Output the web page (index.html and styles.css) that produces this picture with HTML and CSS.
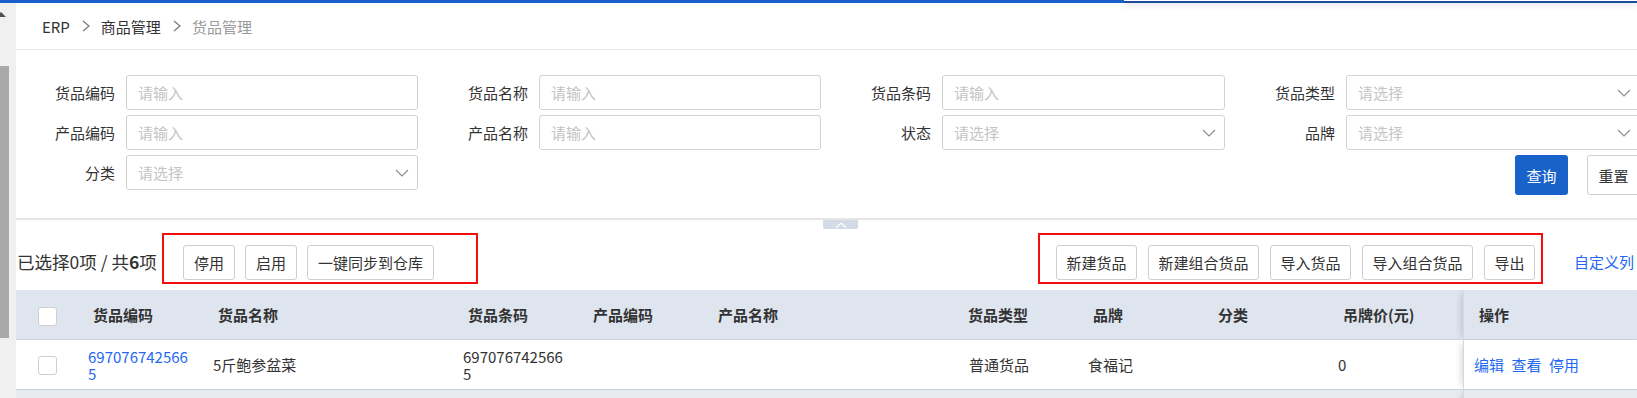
FILE: index.html
```html
<!DOCTYPE html>
<html lang="zh-CN">
<head>
<meta charset="utf-8">
<title>货品管理</title>
<link rel="stylesheet" href="styles.css">
</head>
<body>
<div class="topbar"><div class="topbar-main"></div><div class="topbar-panel"></div></div>
<div class="app">
  <aside class="strip"><span class="strip-arrow"></span><span class="strip-thumb"></span></aside>
  <main class="main">
    <nav class="crumbs">
      <span class="crumb">ERP</span>
      <svg class="crumb-sep" width="8" height="12" viewBox="0 0 8 12"><polyline points="1,1 7,6 1,11" /></svg>
      <span class="crumb">商品管理</span>
      <svg class="crumb-sep" width="8" height="12" viewBox="0 0 8 12"><polyline points="1,1 7,6 1,11" /></svg>
      <span class="crumb crumb-current">货品管理</span>
    </nav>

    <form class="filter">
      <div class="field"><span class="field-label">货品编码</span><input class="control" placeholder="请输入"></div>
      <div class="field"><span class="field-label">货品名称</span><input class="control" placeholder="请输入"></div>
      <div class="field"><span class="field-label">货品条码</span><input class="control" placeholder="请输入"></div>
      <div class="field"><span class="field-label">货品类型</span><div class="control select"><span>请选择</span><svg class="chev" width="14" height="8" viewBox="0 0 14 8"><polyline points="1,1 7,7 13,1" /></svg></div></div>

      <div class="field"><span class="field-label">产品编码</span><input class="control" placeholder="请输入"></div>
      <div class="field"><span class="field-label">产品名称</span><input class="control" placeholder="请输入"></div>
      <div class="field"><span class="field-label">状态</span><div class="control select"><span>请选择</span><svg class="chev" width="14" height="8" viewBox="0 0 14 8"><polyline points="1,1 7,7 13,1" /></svg></div></div>
      <div class="field"><span class="field-label">品牌</span><div class="control select"><span>请选择</span><svg class="chev" width="14" height="8" viewBox="0 0 14 8"><polyline points="1,1 7,7 13,1" /></svg></div></div>

      <div class="field"><span class="field-label">分类</span><div class="control select"><span>请选择</span><svg class="chev" width="14" height="8" viewBox="0 0 14 8"><polyline points="1,1 7,7 13,1" /></svg></div></div>
      <div class="filter-buttons">
        <button type="button" class="btn-query">查询</button>
        <button type="button" class="btn-reset">重置</button>
      </div>
    </form>

    <div class="divider"><span class="collapse"><svg width="12" height="6" viewBox="0 0 12 6"><polyline points="1,5.5 6,1 11,5.5" /></svg></span></div>

    <div class="actions">
      <div class="count">已选择0项 / 共<b>6</b>项</div>
      <div class="mark mark-left">
        <button type="button" class="btn">停用</button>
        <button type="button" class="btn">启用</button>
        <button type="button" class="btn">一键同步到仓库</button>
      </div>
      <div class="mark mark-right">
        <button type="button" class="btn">新建货品</button>
        <button type="button" class="btn">新建组合货品</button>
        <button type="button" class="btn">导入货品</button>
        <button type="button" class="btn">导入组合货品</button>
        <button type="button" class="btn">导出</button>
      </div>
      <a class="custom-cols">自定义列</a>
    </div>

    <table class="grid">
      <colgroup>
        <col class="c-check"><col class="c-s"><col class="c-l"><col class="c-s"><col class="c-s"><col class="c-l"><col class="c-s"><col class="c-s"><col class="c-s"><col class="c-price"><col>
      </colgroup>
      <thead>
        <tr>
          <th class="cell-check"><span class="checkbox"></span></th>
          <th>货品编码</th>
          <th>货品名称</th>
          <th>货品条码</th>
          <th>产品编码</th>
          <th>产品名称</th>
          <th>货品类型</th>
          <th>品牌</th>
          <th>分类</th>
          <th>吊牌价(元)</th>
          <th class="fixed">操作</th>
        </tr>
      </thead>
      <tbody>
        <tr>
          <td class="cell-check"><span class="checkbox"></span></td>
          <td><a class="link">6970767425665</a></td>
          <td>5斤鲍参盆菜</td>
          <td>6970767425665</td>
          <td></td>
          <td></td>
          <td class="cell-type">普通货品</td>
          <td>食福记</td>
          <td></td>
          <td>0</td>
          <td class="fixed"><a class="link op">编辑</a><a class="link op">查看</a><a class="link op">停用</a></td>
        </tr>
        <tr class="stripe">
          <td class="cell-check"><span class="checkbox"></span></td>
          <td></td><td></td><td></td><td></td><td></td><td></td><td></td><td></td><td></td>
          <td class="fixed"></td>
        </tr>
      </tbody>
    </table>
  </main>
</div>
</body>
</html>
```

FILE: styles.css
```css
html, body {
  margin: 0;
  overflow: hidden;
}

body {
  width: 1637px;
  height: 398px;
  font-family: "Noto Sans CJK SC", "Noto Sans", sans-serif;
  font-size: 15px;
  color: #333;
  background: #fff;
}

/* top bar */
.topbar {
  display: flex;
  height: 3px;
  position: relative;
  z-index: 2;
}
.topbar-main {
  width: 1124px;
  background: #1b5fcb;
}
.topbar-panel {
  flex: 1;
  box-sizing: border-box;
  border-top: 1.5px solid #fff;
  background: #1a4d9e;
  box-shadow: 0 2px 6px rgba(0, 0, 0, 0.16);
}

.app {
  display: flex;
}

/* left scrollbar strip */
.strip {
  flex: 0 0 16px;
  width: 16px;
  height: 395px;
  background: #f0f0f0;
  display: flex;
  flex-direction: column;
  overflow: hidden;
}
.strip-arrow {
  width: 0;
  height: 0;
  border-left: 5px solid transparent;
  border-right: 5px solid transparent;
  border-bottom: 5px solid #505050;
  margin: 9px 0 0 -4px;
}
.strip-thumb {
  width: 9px;
  height: 272px;
  margin-top: 49px;
  background: #a8a8a8;
}

.main {
  flex: 0 0 1625px;
  width: 1625px;
}

/* breadcrumb */
.crumbs {
  height: 46px;
  border-bottom: 1px solid #ebebeb;
  display: flex;
  align-items: center;
  padding-left: 26px;
}
.crumb {
  color: #333;
}
.crumb-current {
  color: #9a9a9a;
}
.crumb-sep {
  margin: 0 11px 0 12px;
}
.crumb-sep polyline {
  fill: none;
  stroke: #777;
  stroke-width: 1.2;
}

/* filter form */
.filter {
  display: grid;
  grid-template-columns: 402px 392px 393px 404px;
  column-gap: 11px;
  row-gap: 5px;
  padding: 25px 0 23px;
  margin: 0;
}
.field {
  display: flex;
  align-items: center;
  height: 35px;
}
.field-label {
  flex: 0 0 110px;
  width: 110px;
  box-sizing: border-box;
  padding-right: 11px;
  text-align: right;
  color: #333;
}
.control {
  flex: 1;
  min-width: 0;
  height: 35px;
  box-sizing: border-box;
  border: 1px solid #d2d2d2;
  border-radius: 3px;
  padding: 0 11px;
  background: #fff;
  font: inherit;
  color: #333;
  outline: none;
}
.control::placeholder {
  color: #c4c4c4;
}
.select {
  display: flex;
  align-items: center;
  justify-content: space-between;
  color: #c4c4c4;
  padding-right: 8px;
}
.chev polyline {
  fill: none;
  stroke: #8a8a8a;
  stroke-width: 1.1;
}
.filter-buttons {
  grid-column: 4;
  display: flex;
  justify-content: flex-end;
  gap: 19px;
}
.btn-query,
.btn-reset {
  width: 53px;
  height: 40px;
  border-radius: 3px;
  font: inherit;
  padding: 0;
}
.btn-query {
  background: #1862c9;
  border: none;
  color: #fff;
}
.btn-reset {
  background: #fff;
  border: 1px solid #cfcfcf;
  color: #333;
}

/* divider with collapse tab */
.divider {
  height: 2px;
  background: #e6e6e6;
  position: relative;
}
.collapse {
  position: absolute;
  left: 807px;
  top: 2px;
  width: 35px;
  height: 9px;
  background: #d3dce6;
  border-radius: 0 0 2px 2px;
  display: flex;
  align-items: center;
  justify-content: center;
}
.collapse polyline {
  fill: none;
  stroke: #fff;
  stroke-width: 1.3;
}

/* action bar */
.actions {
  display: flex;
  align-items: flex-end;
  padding: 13px 0 6px;
}
.count {
  flex: 0 0 145px;
  padding-left: 1px;
  font-size: 17.5px;
  line-height: 24px;
  margin-bottom: 10px;
  white-space: nowrap;
}
.count b {
  font-weight: 700;
}
.mark {
  display: flex;
  border: 2px solid #f40d0d;
}
.mark-left {
  gap: 10px;
  padding: 10px 42px 2px 19px;
}
.mark-left .btn {
  padding: 0 10px;
}
.mark-right {
  gap: 11px;
  padding: 10px 6px 2px 16px;
  margin-left: auto;
}
.btn {
  height: 35px;
  padding: 0 9.5px;
  border: 1px solid #cfcfcf;
  border-radius: 3px;
  background: #fff;
  font: inherit;
  color: #333;
  white-space: nowrap;
}
.custom-cols {
  margin: 0 7px 10px 31px;
  line-height: 24px;
  color: #2468f2;
  white-space: nowrap;
}

/* table */
.grid {
  width: 1625px;
  table-layout: fixed;
  border-collapse: separate;
  border-spacing: 0;
}
.c-check { width: 62px; }
.c-s { width: 125px; }
.c-l { width: 250px; }
.c-price { width: 135px; }

.grid th {
  box-sizing: border-box;
  height: 50px;
  padding: 0 0 0 15px;
  background: #dfe5ef;
  border-bottom: 1px solid #cbd2dd;
  text-align: left;
  font-weight: 700;
  color: #333;
  white-space: nowrap;
}
.grid td {
  box-sizing: border-box;
  height: 50px;
  padding: 0 10px;
  border-bottom: 1px solid #cbd2dd;
  line-height: 17px;
  vertical-align: middle;
  word-break: break-all;
  background: #fff;
}
.grid .cell-check {
  padding: 0;
  text-align: center;
}
.grid .cell-type {
  padding-left: 16px;
}
.grid tr.stripe td {
  background: #e8ecf2;
}
.checkbox {
  display: inline-block;
  width: 19px;
  height: 19px;
  box-sizing: border-box;
  border: 1px solid #cfcfcf;
  border-radius: 3px;
  background: #fff;
  vertical-align: middle;
}
.grid .fixed {
  border-left: 1px solid #d3d9e2;
  box-shadow: -6px 0 6px -4px rgba(0, 0, 0, 0.14);
}
.link {
  color: #2468f2;
}
.op {
  margin-right: 7.5px;
}
```
